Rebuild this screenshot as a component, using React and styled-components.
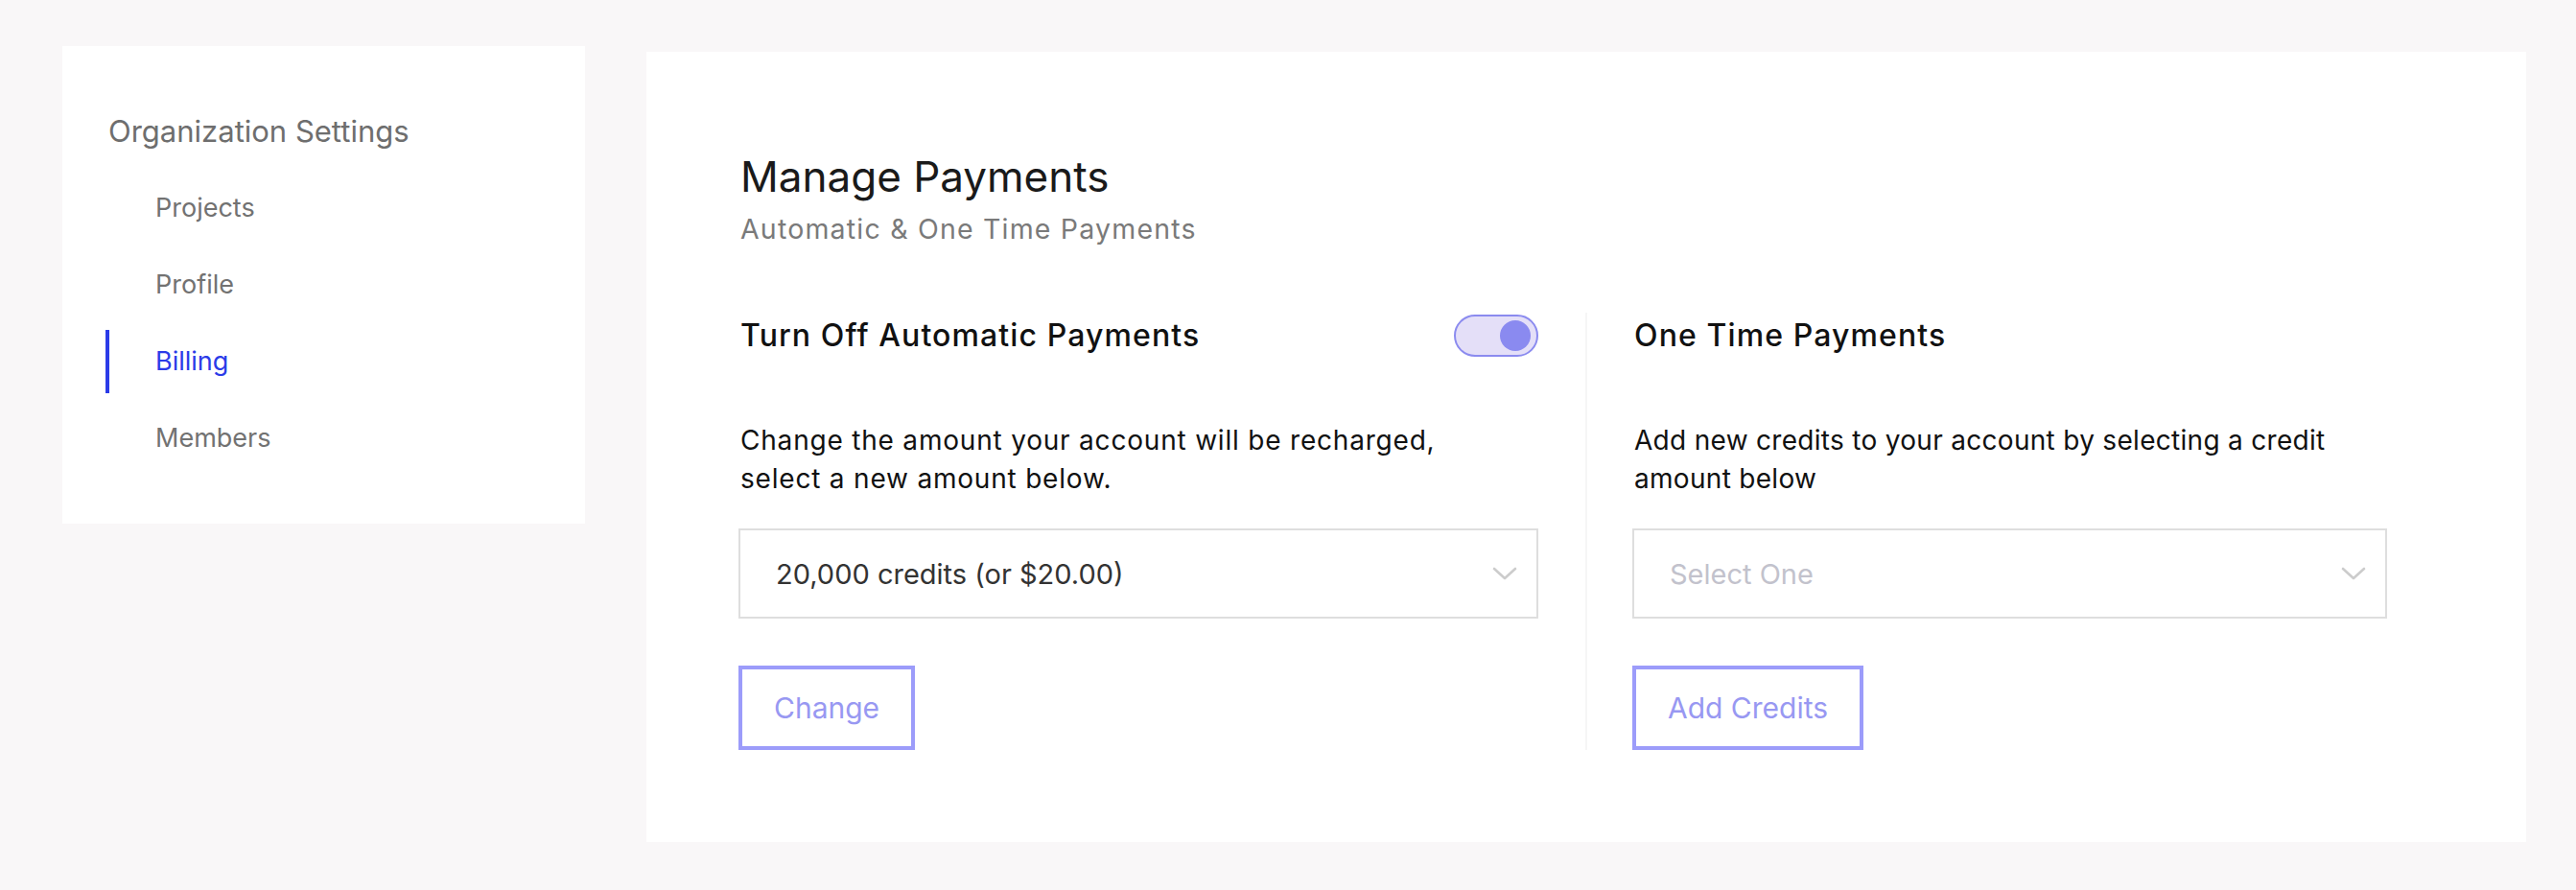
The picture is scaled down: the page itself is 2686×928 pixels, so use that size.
import React from "react";
import styled, { createGlobalStyle } from "styled-components";

const Global = createGlobalStyle`
  html, body { margin: 0; padding: 0; background: #f9f7f8; }
  body { font-family: Inter, "Noto Sans", "Liberation Sans", sans-serif; -webkit-font-smoothing: antialiased; }
  * { box-sizing: border-box; }
`;

const Page = styled.div`
  display: flex;
  align-items: flex-start;
  gap: 64px;
  padding: 48px 0 0 65px;
  min-height: 928px;
`;

const Sidebar = styled.nav`
  width: 545px;
  background: #fff;
  padding: 69px 0 56px 45px;
  display: flex;
  flex-direction: column;
`;

const SideTitle = styled.div`
  font-size: 31px;
  line-height: 40px;
  color: #6e6e6e;
  padding-left: 3px;
  margin-bottom: 27px;
`;

const NavList = styled.ul`
  list-style: none;
  margin: 0;
  padding: 0;
  display: flex;
  flex-direction: column;
  gap: 14px;
`;

const NavItem = styled.li`
  height: 66px;
  line-height: 66px;
  font-size: 27px;
  padding-left: 48px;
  border-left: 4px solid ${(p) => (p.$active ? "#2b3be8" : "transparent")};
  color: ${(p) => (p.$active ? "#2b3be8" : "#727272")};
`;

const Main = styled.main`
  width: 1960px;
  margin-top: 6px;
  background: #fff;
  padding: 103px 0 96px 96px;
`;

const Heading = styled.h1`
  margin: 0;
  font-size: 44px;
  line-height: 54px;
  font-weight: 400;
  color: #1a1a1a;
  padding-left: 2px;
`;

const Subtitle = styled.div`
  margin-top: 10px;
  font-size: 28.5px;
  line-height: 36px;
  letter-spacing: 1.2px;
  color: #7a7a7a;
  padding-left: 2px;
`;

const Columns = styled.div`
  display: flex;
  margin-top: 69px;
`;

const Column = styled.section`
  width: ${(p) => p.$width}px;
  box-sizing: content-box;
  display: flex;
  flex-direction: column;
  align-items: flex-start;
  ${(p) => (p.$left ? "padding-right: 49px; border-right: 2px solid #f6f6f6;" : "padding-left: 47px;")}
`;

const ColHeader = styled.div`
  width: 100%;
  height: 48px;
  display: flex;
  align-items: center;
  justify-content: space-between;
`;

const ColTitle = styled.h2`
  margin: 0;
  font-size: 32px;
  line-height: 48px;
  font-weight: 500;
  letter-spacing: 1.1px;
  color: #111;
  padding-left: 2px;
`;

const Toggle = styled.div`
  width: 88px;
  height: 44px;
  border-radius: 22px;
  border: 2px solid #8b8bef;
  background: #e4dff8;
  display: flex;
  align-items: center;
  justify-content: flex-end;
  padding-right: 6px;
`;

const Knob = styled.div`
  width: 32px;
  height: 32px;
  border-radius: 50%;
  background: #8a8af0;
`;

const Desc = styled.p`
  margin: 65px 0 0;
  font-size: 28px;
  line-height: 40px;
  letter-spacing: ${(p) => p.$spacing || 0.5}px;
  color: #111;
  padding-left: 2px;
`;

const Select = styled.div`
  margin-top: 32px;
  width: 100%;
  height: 94px;
  border: 2px solid #dedede;
  display: flex;
  align-items: center;
  justify-content: space-between;
  padding: 0 20px 0 37px;
  font-size: 29px;
  color: ${(p) => (p.$placeholder ? "#c2c2cc" : "#333")};
`;

const Button = styled.button`
  margin-top: 49px;
  height: 88px;
  padding: 0 33px;
  border: 4px solid #9c9cfa;
  background: #fff;
  color: #9898f2;
  font-family: inherit;
  font-size: 30px;
  cursor: pointer;
`;

const Chevron = () => (
  <svg width="26" height="16" viewBox="0 0 26 16" fill="none">
    <path d="M2 3l11 10L24 3" stroke="#cccccc" strokeWidth="2.6" strokeLinecap="round" strokeLinejoin="round" />
  </svg>
);

export default function App() {
  return (
    <>
      <Global />
      <Page>
        <Sidebar>
          <SideTitle>Organization Settings</SideTitle>
          <NavList>
            <NavItem>Projects</NavItem>
            <NavItem>Profile</NavItem>
            <NavItem $active>Billing</NavItem>
            <NavItem>Members</NavItem>
          </NavList>
        </Sidebar>
        <Main>
          <Heading>Manage Payments</Heading>
          <Subtitle>Automatic &amp; One Time Payments</Subtitle>
          <Columns>
            <Column $left $width={834}>
              <ColHeader>
                <ColTitle>Turn Off Automatic Payments</ColTitle>
                <Toggle>
                  <Knob />
                </Toggle>
              </ColHeader>
              <Desc $spacing={0.8}>
                Change the amount your account will be recharged,
                <br />
                select a new amount below.
              </Desc>
              <Select>
                <span>20,000 credits (or $20.00)</span>
                <Chevron />
              </Select>
              <Button>Change</Button>
            </Column>
            <Column $width={787}>
              <ColHeader>
                <ColTitle>One Time Payments</ColTitle>
              </ColHeader>
              <Desc $spacing={0.3}>
                Add new credits to your account by selecting a credit
                <br />
                amount below
              </Desc>
              <Select $placeholder>
                <span>Select One</span>
                <Chevron />
              </Select>
              <Button>Add Credits</Button>
            </Column>
          </Columns>
        </Main>
      </Page>
    </>
  );
}
